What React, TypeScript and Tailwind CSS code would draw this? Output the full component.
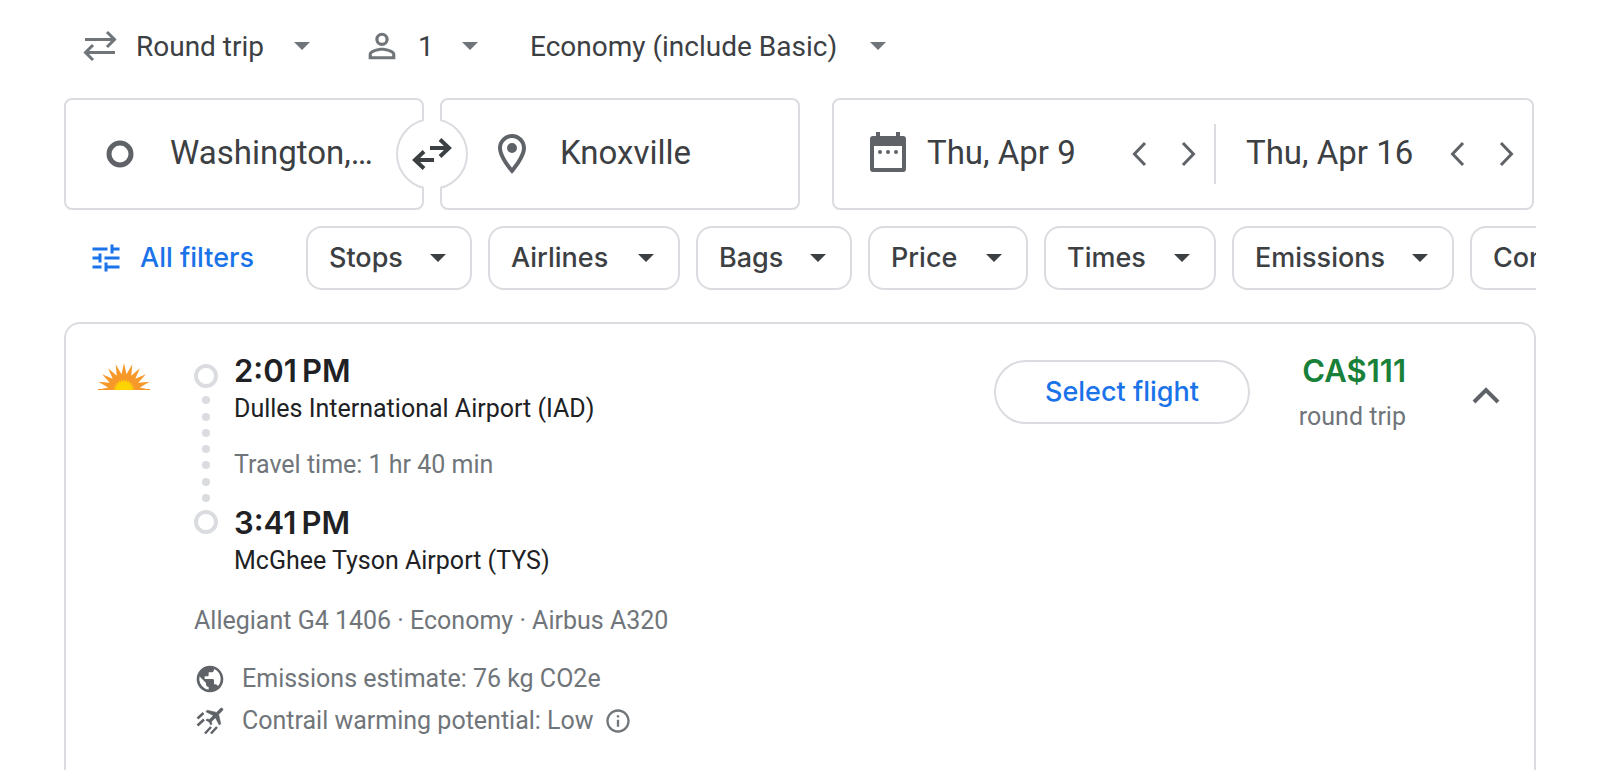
import React from "react";
import {
  MdInfoOutline,
  MdOutlineLocationOn,
  MdPersonOutline,
  MdPublic,
  MdTune,
} from "react-icons/md";

const filters = [
  { label: "Stops", width: "w-[166px]" },
  { label: "Airlines", width: "w-[192px]" },
  { label: "Bags", width: "w-[156px]" },
  { label: "Price", width: "w-[160px]" },
  { label: "Times", width: "w-[172px]" },
  { label: "Emissions", width: "w-[222px]" },
  { label: "Connecting airports", width: "w-[346px]" },
];

// Half-circle star, centred on the bottom middle of the logo
const sunRays = (outer: number, inner: number, rays: number) => {
  const points: string[] = [];
  const steps = (rays - 1) * 2;
  for (let i = 0; i <= steps; i++) {
    const r = i % 2 === 0 ? outer : inner;
    const a = Math.PI - (Math.PI * i) / steps;
    points.push(`${26 + r * Math.cos(a)},${27 - r * Math.sin(a)}`);
  }
  return points.join(" ");
};

const SunLogo: React.FC = () => (
  <svg width="52" height="28" viewBox="0 0 52 28" role="img" aria-label="Allegiant">
    <polygon points={sunRays(27, 16, 11)} fill="#f7982a" />
    <rect x="0" y="26" width="52" height="1" fill="#f7982a" />
    <polygon points={sunRays(11, 8, 13)} fill="#ffd400" />
  </svg>
);

const Caret: React.FC<{ className?: string }> = ({ className }) => (
  <svg width="16" height="8" viewBox="0 0 16 8" className={className} aria-hidden="true">
    <path d="M0 0h16L8 8z" fill="currentColor" />
  </svg>
);

const RoundTripIcon: React.FC = () => (
  <svg width="40" height="40" viewBox="0 0 40 40" fill="none" stroke="#70757a" strokeWidth="3" aria-hidden="true">
    <path d="M5 13.500h30M27 6l7.500 7.500L27 21" />
    <path d="M35 26.500H5M13 19l-7.500 7.500L13 34" />
  </svg>
);

const SwapIcon: React.FC = () => (
  <svg width="48" height="48" viewBox="0 0 48 48" fill="none" stroke="#3c4043" strokeWidth="4" aria-hidden="true">
    <path d="M22 18h19M32 9.500l9 8.500-9 8.500" />
    <path d="M26 30H7M16 21.500L7 30l9 8.500" />
  </svg>
);

const CalendarIcon: React.FC = () => (
  <svg width="48" height="48" viewBox="0 0 24 24" fill="#5f6368" className="shrink-0" aria-hidden="true">
    <path d="M6 1h2v2h8V1h2v2h1.500A1.500 1.500 0 0 1 21 4.500v15a1.500 1.500 0 0 1-1.500 1.500h-15A1.500 1.500 0 0 1 3 19.500v-15A1.500 1.500 0 0 1 4.500 3H6zM5 8v11h14V8z" />
    <circle cx="8" cy="11" r="1" />
    <circle cx="12" cy="11" r="1" />
    <circle cx="16" cy="11" r="1" />
  </svg>
);

const ContrailIcon: React.FC = () => (
  <svg width="32" height="32" viewBox="0 0 32 32" fill="#5f6368" aria-hidden="true">
    <path
      transform="translate(28.5 3.5) rotate(45) translate(-11.5 -2)"
      d="M21 16v-2l-8-5V3.500c0-.83-.67-1.500-1.500-1.500S10 2.670 10 3.500V9l-8 5v2l8-2.500V19l-2 1.500V22l3.500-1 3.500 1v-1.500L13 19v-5.500l8 2.500z"
      stroke="#5f6368"
      strokeWidth="0.6"
    />
    <path
      d="M3.500 13.500l6-5.500M3.500 20.500l6.500-6M11 28.500l6-6.500M17 28.500l6-6.500"
      stroke="#5f6368"
      strokeWidth="2.500"
    />
  </svg>
);

const StepButton: React.FC<{ label: string; next?: boolean }> = ({ label, next }) => (
  <button aria-label={label} className="flex h-12 w-12 shrink-0 items-center justify-center">
    <svg width="24" height="28" viewBox="0 0 24 28" fill="none" stroke="#5f6368" strokeWidth="3">
      <path d={next ? "M7 3l10.500 11L7 25" : "M17 3L6.500 14 17 25"} />
    </svg>
  </button>
);

const TripSelect: React.FC<{ label: string; value: string; width: string }> = ({
  label,
  value,
  width,
}) => (
  <div className={`relative flex items-center ${width}`}>
    <select
      aria-label={label}
      className="w-full appearance-none bg-transparent pt-0.5 text-[28px] leading-10 text-[#3c4043]"
    >
      <option>{value}</option>
    </select>
    <Caret className="pointer-events-none absolute right-0 text-[#70757a]" />
  </div>
);

const Timeline: React.FC = () => (
  <div className="flex w-6 flex-col items-center justify-between pt-[11px] pb-[47px]">
    <span className="h-6 w-6 rounded-full border-4 border-[#dadce0]" />
    {[1, 2, 3, 4, 5, 6, 7].map((dot) => (
      <span key={dot} className="h-2 w-2 rounded-full bg-[#dadce0]" />
    ))}
    <span className="h-6 w-6 rounded-full border-4 border-[#dadce0]" />
  </div>
);

const App: React.FC = () => {
  return (
    <main className="h-screen overflow-hidden bg-white px-16 font-['Roboto',sans-serif] text-[#202124]">
      <div className="flex h-[92px] items-center gap-[52px] pl-4">
        <div className="flex items-center gap-4">
          <RoundTripIcon />
          <TripSelect label="Ticket type" value="Round trip" width="w-[174px]" />
        </div>
        <div className="flex items-center gap-4">
          <MdPersonOutline size={40} color="#70757a" />
          <TripSelect label="Passengers" value="1" width="w-[60px]" />
        </div>
        <TripSelect label="Seating class" value="Economy (include Basic)" width="w-[356px]" />
      </div>

      <div className="mt-1.5 grid h-28 grid-cols-2 text-[33px] text-[#3c4043]">
        <div className="relative grid grid-cols-2 gap-4">
          <label className="flex min-w-0 items-center gap-[26px] rounded-lg border-2 border-[#dadce0] pl-[30px]">
            <svg width="48" height="48" viewBox="0 0 48 48" className="shrink-0" aria-hidden="true">
              <circle cx="24" cy="24" r="11" fill="none" stroke="#5f6368" strokeWidth="5" />
            </svg>
            <input aria-label="Where from?" defaultValue="Washington,…" className="w-full min-w-0 pb-0.5" />
          </label>
          <label className="flex min-w-0 items-center gap-6 rounded-lg border-2 border-[#dadce0] pl-[46px]">
            <MdOutlineLocationOn size={48} color="#5f6368" className="shrink-0" />
            <input aria-label="Where to?" defaultValue="Knoxville" className="w-full min-w-0 pb-0.5" />
          </label>
          <button
            aria-label="Swap origin and destination"
            className="absolute top-1/2 left-1/2 flex h-[72px] w-[72px] -translate-x-1/2 -translate-y-1/2 items-center justify-center rounded-full border-2 border-[#dadce0] bg-white"
          >
            <span className="absolute -inset-y-0.5 w-4 bg-white" />
            <span className="relative">
              <SwapIcon />
            </span>
          </button>
        </div>

        <div className="mr-0.5 ml-8 grid grid-cols-[380fr_2px_316fr] items-center rounded-lg border-2 border-[#dadce0]">
          <div className="flex min-w-0 items-center pr-0.5 pl-[30px]">
            <CalendarIcon />
            <input aria-label="Departure" defaultValue="Thu, Apr 9" className="ml-[15px] w-full min-w-0 pb-0.5" />
            <StepButton label="Earlier departure" />
            <StepButton label="Later departure" next />
          </div>
          <div className="h-[60px] bg-[#dadce0]" />
          <div className="flex min-w-0 items-center pr-0.5 pl-[30px]">
            <input aria-label="Return" defaultValue="Thu, Apr 16" className="w-full min-w-0 pb-0.5" />
            <StepButton label="Earlier return" />
            <StepButton label="Later return" next />
          </div>
        </div>
      </div>

      <div className="mt-4 flex gap-4 overflow-hidden font-['Inter',sans-serif] text-[27px] font-medium">
        <button className="flex h-16 w-[226px] shrink-0 items-center gap-4 pl-6 text-[#1a73e8]">
          <MdTune size={36} />
          All filters
        </button>
        {filters.map((filter) => (
          <button
            key={filter.label}
            className={`flex h-16 shrink-0 items-center justify-between rounded-2xl border-2 border-[#dadce0] pr-6 pl-[21px] whitespace-nowrap text-[#3c4043] ${filter.width}`}
          >
            {filter.label}
            <Caret />
          </button>
        ))}
      </div>

      <section className="mt-8 flex rounded-2xl border-2 border-[#dadce0] pt-[29px] pb-16 pl-8 text-[25px] leading-10">
        <div className="w-24 shrink-0 pt-2.5">
          <SunLogo />
        </div>
        <div className="min-w-0 flex-1">
          <div className="flex gap-4">
            <Timeline />
            <div>
              <p className="font-['Inter',sans-serif] text-[31px] leading-9 font-semibold">{"2:01\u202fPM"}</p>
              <p>Dulles International Airport (IAD)</p>
              <p className="mt-4 text-[#70757a]">Travel time: 1 hr 40 min</p>
              <p className="mt-5 font-['Inter',sans-serif] text-[31px] leading-9 font-semibold">{"3:41\u202fPM"}</p>
              <p>McGhee Tyson Airport (TYS)</p>
            </div>
          </div>
          <p className="mt-5 text-[#70757a]">Allegiant G4 1406 · Economy · Airbus A320</p>
          <ul className="mt-[17px] leading-[42px] text-[#70757a]">
            <li className="flex items-center gap-4">
              <MdPublic size={32} color="#5f6368" />
              Emissions estimate: 76 kg CO2e
            </li>
            <li className="flex items-center gap-4">
              <ContrailIcon />
              <span className="flex items-center gap-2.5">
                Contrail warming potential: Low
                <button aria-label="About contrail warming">
                  <MdInfoOutline size={28} />
                </button>
              </span>
            </li>
          </ul>
        </div>
        <button className="mt-[7px] h-16 w-64 shrink-0 rounded-full border-2 border-[#dadce0] font-['Inter',sans-serif] text-[27px] font-medium text-[#1a73e8]">
          Select flight
        </button>
        <div className="w-[156px] shrink-0 text-right">
          <p className="font-['Inter',sans-serif] text-[31px] leading-9 font-semibold text-[#188038]">CA$111</p>
          <p className="mt-2 text-[#70757a]">round trip</p>
        </div>
        <button
          aria-label="Hide flight details"
          className="mt-[19px] mr-6 ml-14 flex h-12 w-12 shrink-0 items-center justify-center"
        >
          <svg width="32" height="32" viewBox="0 0 32 32" fill="none" stroke="#5f6368" strokeWidth="4">
            <path d="M4 22l12-12 12 12" />
          </svg>
        </button>
      </section>
    </main>
  );
};

export default App;
